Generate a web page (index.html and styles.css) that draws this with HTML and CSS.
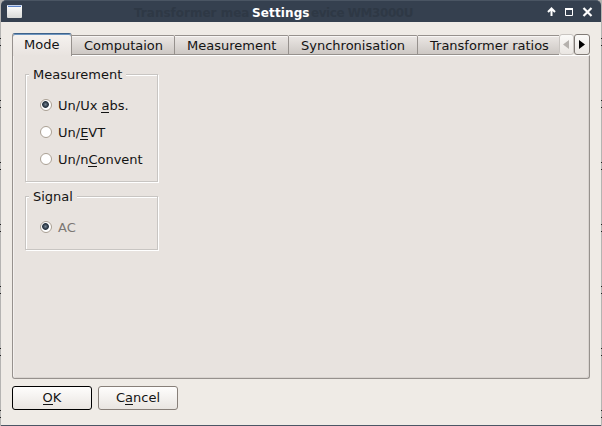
FILE: index.html
```html
<!DOCTYPE html>
<html lang="en">
<head>
<meta charset="utf-8">
<title>Settings</title>
<link rel="stylesheet" href="styles.css">
</head>
<body>
<div class="window">
  <header class="titlebar">
    <svg class="app-icon" width="15" height="13"><defs><linearGradient id="g" x2="0" y2="1"><stop stop-color="#fff"/><stop offset="1" stop-color="#d9dad8"/></linearGradient></defs><rect width="15" height="13" rx="1" fill="url(#g)"/><path d="M0 .5h15" stroke="#c3d2ee"/><path d="M1 1.500h13" stroke="#5b82c6"/></svg>
    <div class="caption">
      <span class="ghost before">Transformer mea</span>
      <h1 class="title">Settings</h1>
      <span class="ghost after">evice WM3000U</span>
    </div>
    <svg class="controls" width="46" height="10" fill="none" stroke="#fff"><path d="M4.500 1v8M1 5l3.500-3.500L8 5" stroke-width="2"/><path d="M18.500 1.500h7v7h-7z"/><path d="M18 2h8" stroke-width="2"/><path d="M36.500 1l8 8M44.500 1l-8 8" stroke-width="2.200"/></svg>
  </header>
  <main class="content">
    <nav class="tabs">
      <div class="tab active">Mode</div>
      <div class="tab computation">Computaion</div>
      <div class="tab measurement">Measurement</div>
      <div class="tab sync">Synchronisation</div>
      <div class="tab ratios">Transformer ratios</div>
      <div class="scroll disabled"><svg width="6" height="9"><path d="M6 0v9L0 4.500z" fill="#b5b1ad"/></svg></div>
      <div class="scroll next"><svg width="6" height="9"><path d="M0 0v9l6-4.500z" fill="#000"/></svg></div>
    </nav>
    <section class="pane">
      <div class="group modes">
        <h2 class="legend">Measurement</h2>
        <div class="option"><i class="radio checked"></i><span>Un/Ux <u>a</u>bs.</span></div>
        <div class="option"><i class="radio"></i><span>Un/<u>E</u>VT</span></div>
        <div class="option"><i class="radio"></i><span>Un/n<u>C</u>onvent</span></div>
      </div>
      <div class="group signal">
        <h2 class="legend">Signal</h2>
        <div class="option off"><i class="radio checked"></i><span>AC</span></div>
      </div>
    </section>
    <footer class="buttons">
      <button class="button default"><span><u>O</u>K</span></button>
      <button class="button"><span>C<u>a</u>ncel</span></button>
    </footer>
  </main>
</div>
</body>
</html>
```
FILE: styles.css
```css
* { box-sizing: border-box; }
body { margin: 0; font: 13px/16px "DejaVu Sans", sans-serif; color: #141414; overflow: hidden; }
/* Rows of the window behind show through at both edges */
html { background: repeating-linear-gradient(#b5b4b2 0 38px, #222 38px 39px, #b5b4b2 39px 45px, #222 45px 46px, #b5b4b2 46px 62px); }
svg { display: block; }
.window { width: 600px; height: 426px; margin-left: 1px; background: #efebe6; border-bottom: 1px solid #4b5665; border-radius: 5px 5px 0 0; }
.titlebar { height: 22px; background: #35404f; border-top: 1px solid #4a5563; border-radius: 5px 5px 0 0; display: flex; align-items: center; padding: 0 8px 0 6px; }
.app-icon { margin-top: -1px; }
.controls { margin: 1px 0 0 auto; }
.caption { display: flex; margin: 3px 0 0 112px; font-size: 12px; font-weight: bold; white-space: nowrap; }
.title { margin: 0; font-size: 12px; line-height: 16px; color: #fff; width: 59px; letter-spacing: .12px; }
.ghost { color: #2e3845; }
.before { width: 118px; }
.after { letter-spacing: -.45px; }
.content { padding: 11px 11px 0; }
.tabs { display: flex; align-items: flex-end; height: 22px; width: 578px; }
.tab { height: 20px; border: 1px solid #96918d; border-left: 0; border-top-right-radius: 2px; background: linear-gradient(#ebe7e4, #cdc8c4); box-shadow: inset 0 1px #f8f6f4; padding: 1px 0 0 12px; white-space: nowrap; line-height: 18px; }
.active { position: relative; width: 60px; height: 23px; margin-bottom: -1px; border-left: 1px solid #96918d; border-top: 1px solid #3d628a; border-bottom: 0; border-radius: 3px 3px 0 0; background: linear-gradient(#f6f3f0, #e8e3df); box-shadow: inset 0 1px #6d95bf; padding: 2px 0 0 11px; }
.computation { width: 103px; }
.measurement { width: 114px; }
.sync { width: 129px; }
.ratios { width: 141px; border-right: 0; border-radius: 0; }
.scroll { height: 21px; border: 1px solid #c9c5c1; border-radius: 3px; background: linear-gradient(#fbfaf8, #eae6e2); display: flex; align-items: center; justify-content: center; padding-bottom: 1px; width: 15px; }
.disabled { padding-right: 2px; }
.next { width: 16px; border-color: #817b76; }
.pane { width: 578px; height: 324px; background: #e8e3df; border: 1px solid #96918d; border-top: 1px solid #fff; border-radius: 0 0 3px 3px; box-shadow: inset 1px 0 #f4f1ef, inset -1px -1px #d9d4d0; padding: 18px 0 0 12px; }
.group { width: 133px; border: 1px solid #c8c5c2; box-shadow: 1px 1px #fff, inset 1px 1px #fff; }
.modes { height: 108px; }
.signal { height: 54px; margin-top: 14px; }
.legend { margin: -8px 0 0 3px; width: max-content; padding: 0 4px; background: #e8e3df; font: inherit; position: relative; }
.option { display: flex; align-items: center; height: 27px; padding-left: 14px; gap: 6px; }
.legend + .option { margin-top: 9px; }
.radio { width: 12px; height: 12px; margin-bottom: 1px; border: 1px solid #aaa094; border-radius: 50%; background: #fff; }
.checked { background: radial-gradient(circle at 45% 45%, #778695 0, #2c3844 2.5px, #2c3844 3px, #fff 3.8px); }
.off { color: #7b7773; }
u { text-decoration: none; box-shadow: 0 1px currentColor; display: inline-block; height: 14px; line-height: 16px; vertical-align: top; }
.buttons { display: flex; gap: 6px; margin-top: 7px; }
.button { width: 80px; height: 24px; padding: 0; font: inherit; color: #141414; border: 1px solid #877f79; border-radius: 3px; background: linear-gradient(#fefdfc, #e9e5e1); }
.default { border-color: #000; }
```
